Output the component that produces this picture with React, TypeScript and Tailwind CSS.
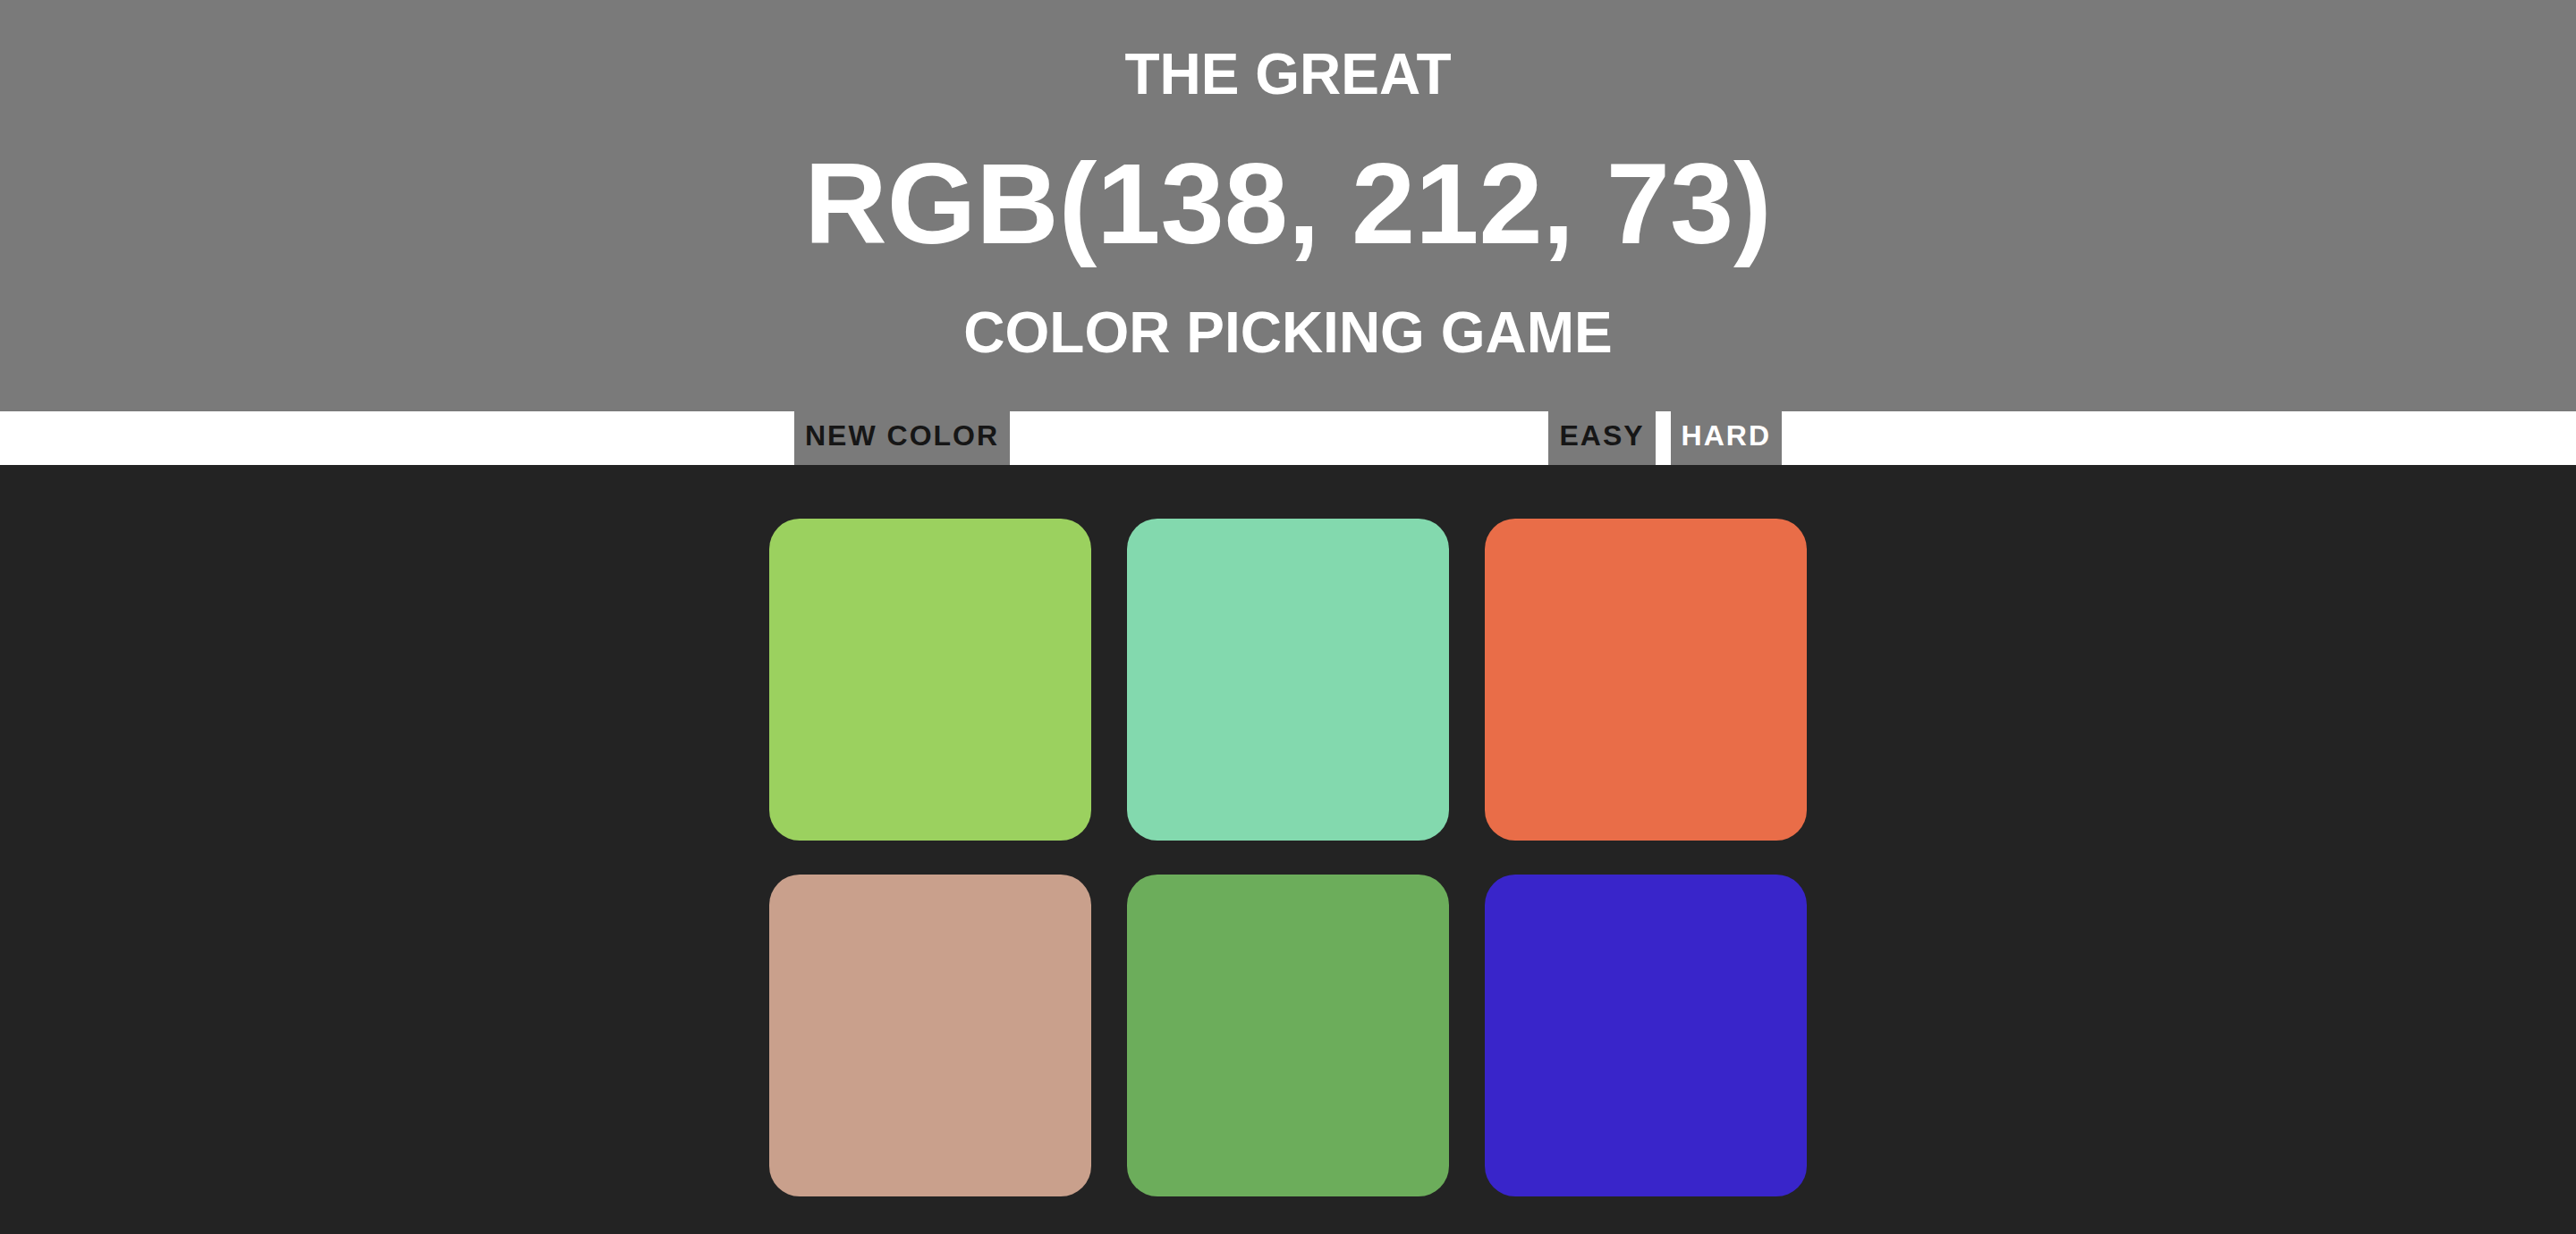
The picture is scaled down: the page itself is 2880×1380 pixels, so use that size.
import { useState } from "react"

const squares = [
  "#9bd15f",
  "#83d9ae",
  "#e96d48",
  "#c9a08c",
  "#6cad5b",
  "#3925ca",
]

export default function App() {
  const [mode, setMode] = useState<"easy" | "hard">("hard")

  return (
    <div className="min-h-screen bg-[#232323] font-['Liberation_Sans',Arial,sans-serif] font-bold uppercase">
      <header className="bg-[#7a7a7a] pt-[48px] pb-[53px] text-center text-white">
        <div className="text-[64px] leading-[70px]">The Great</div>
        <div className="mt-[40px] text-[128px] leading-[140px]">
          RGB(138, 212, 73)
        </div>
        <div className="mt-[39px] text-[64px] leading-[70px]">
          Color Picking Game
        </div>
      </header>

      <div className="h-[60px] bg-white">
        <div className="mx-auto flex h-full max-w-[1104px] items-stretch justify-between text-[32px] leading-[54px] tracking-[2px]">
          <button className="bg-[#7a7a7a] px-[12px] pb-[6px] text-[#161616] uppercase">
            New Color
          </button>
          <div className="flex gap-[17px]">
            <button
              onClick={() => setMode("easy")}
              className={`bg-[#7a7a7a] px-[12px] pb-[6px] uppercase ${
                mode === "easy" ? "text-white" : "text-[#161616]"
              }`}
            >
              Easy
            </button>
            <button
              onClick={() => setMode("hard")}
              className={`bg-[#7a7a7a] px-[12px] pb-[6px] uppercase ${
                mode === "hard" ? "text-white" : "text-[#161616]"
              }`}
            >
              Hard
            </button>
          </div>
        </div>
      </div>

      <main className="mx-auto grid w-[1160px] grid-cols-3 gap-x-[40px] gap-y-[38px] pt-[60px]">
        {squares.map((c) => (
          <div
            key={c}
            className="h-[360px] w-[360px] rounded-[34px]"
            style={{ backgroundColor: c }}
          />
        ))}
      </main>
    </div>
  )
}
